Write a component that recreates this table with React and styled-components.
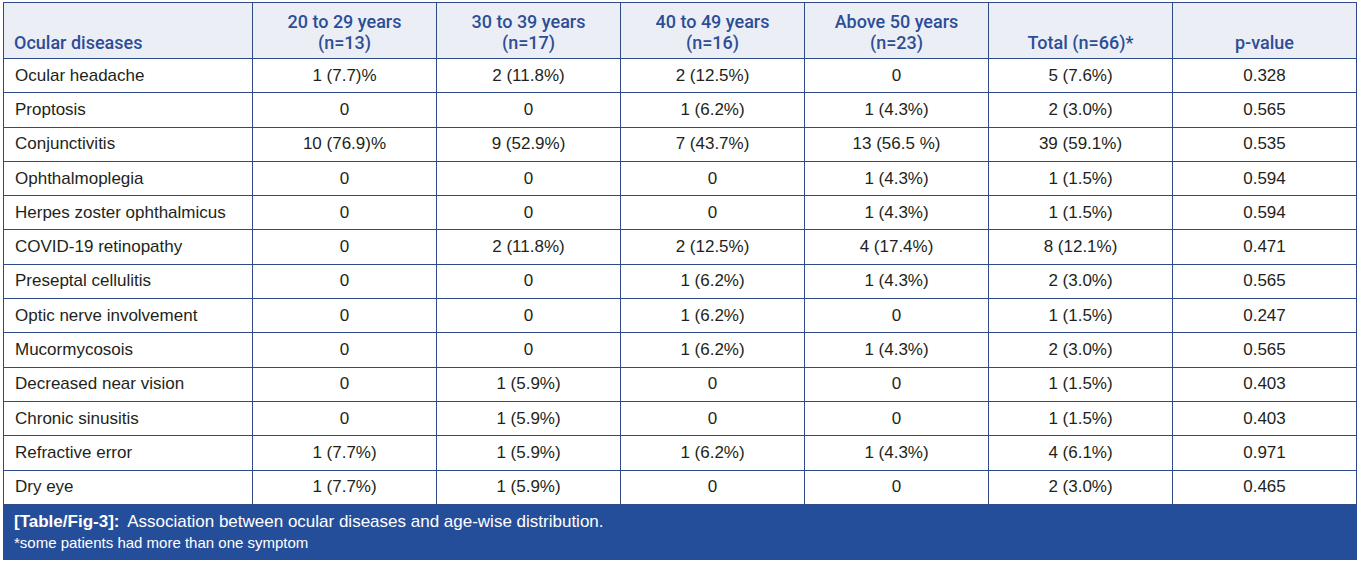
import styled, { createGlobalStyle } from 'styled-components';

const GlobalStyle = createGlobalStyle`
  body {
    margin: 0;
    background: #fff;
    font-family: 'Liberation Sans', Arial, sans-serif;
  }
`;

const Page = styled.div`
  padding: 2px 4px 0 3px;
`;

const Table = styled.table`
  width: 1353px;
  border-collapse: collapse;
  table-layout: fixed;
  font-size: 17px;
  color: #231f20;
`;

const Col = styled.col`
  width: ${(p) => p.$w}px;
`;

const HeadRow = styled.tr`
  height: 56px;
`;

const HeadCell = styled.th`
  padding: 0 10px 5px;
  background: #eceef6;
  color: #2d4e96;
  font-family: Roboto, 'Liberation Sans', sans-serif;
  font-weight: 500;
  font-size: 18px;
  line-height: 21px;
  vertical-align: bottom;
  text-align: ${(p) => (p.$left ? 'left' : 'center')};
  border: 1.5px solid #2d4a86;
`;

const Row = styled.tr`
  height: 34.3px;
`;

const Cell = styled.td`
  padding: 0 11px;
  text-align: ${(p) => (p.$left ? 'left' : 'center')};
  border: 1.5px solid #2d4a86;
  white-space: nowrap;
`;

const Caption = styled.div`
  width: 1354px;
  height: 55px;
  box-sizing: border-box;
  background: #254e9a;
  color: #fff;
  padding: 6px 11px 0;
`;

const CaptionTitle = styled.div`
  font-size: 17px;
  line-height: 22px;

  b {
    font-weight: bold;
    margin-right: 4px;
  }
`;

const CaptionNote = styled.div`
  font-size: 15px;
  line-height: 20px;
`;

const cols = [
  { label: ['20 to 29 years', '(n=13)'] },
  { label: ['30 to 39 years', '(n=17)'] },
  { label: ['40 to 49 years', '(n=16)'] },
  { label: ['Above 50 years', '(n=23)'] },
  { label: ['Total (n=66)*'] },
  { label: ['p-value'] },
];

const rows = [
  ['Ocular headache', '1 (7.7)%', '2 (11.8%)', '2 (12.5%)', '0', '5 (7.6%)', '0.328'],
  ['Proptosis', '0', '0', '1 (6.2%)', '1 (4.3%)', '2 (3.0%)', '0.565'],
  ['Conjunctivitis', '10 (76.9)%', '9 (52.9%)', '7 (43.7%)', '13 (56.5 %)', '39 (59.1%)', '0.535'],
  ['Ophthalmoplegia', '0', '0', '0', '1 (4.3%)', '1 (1.5%)', '0.594'],
  ['Herpes zoster ophthalmicus', '0', '0', '0', '1 (4.3%)', '1 (1.5%)', '0.594'],
  ['COVID-19 retinopathy', '0', '2 (11.8%)', '2 (12.5%)', '4 (17.4%)', '8 (12.1%)', '0.471'],
  ['Preseptal cellulitis', '0', '0', '1 (6.2%)', '1 (4.3%)', '2 (3.0%)', '0.565'],
  ['Optic nerve involvement', '0', '0', '1 (6.2%)', '0', '1 (1.5%)', '0.247'],
  ['Mucormycosois', '0', '0', '1 (6.2%)', '1 (4.3%)', '2 (3.0%)', '0.565'],
  ['Decreased near vision', '0', '1 (5.9%)', '0', '0', '1 (1.5%)', '0.403'],
  ['Chronic sinusitis', '0', '1 (5.9%)', '0', '0', '1 (1.5%)', '0.403'],
  ['Refractive error', '1 (7.7%)', '1 (5.9%)', '1 (6.2%)', '1 (4.3%)', '4 (6.1%)', '0.971'],
  ['Dry eye', '1 (7.7%)', '1 (5.9%)', '0', '0', '2 (3.0%)', '0.465'],
];

const widths = [249, 184, 184, 184, 184, 184, 184];

const App = () => {
  return (
    <Page>
      <GlobalStyle />
      <Table>
        <colgroup>
          {widths.map((w, i) => (
            <Col key={i} $w={w} />
          ))}
        </colgroup>
        <thead>
          <HeadRow>
            <HeadCell $left>Ocular diseases</HeadCell>
            {cols.map((c) => (
              <HeadCell key={c.label[0]}>
                {c.label.map((l) => (
                  <div key={l}>{l}</div>
                ))}
              </HeadCell>
            ))}
          </HeadRow>
        </thead>
        <tbody>
          {rows.map((r) => (
            <Row key={r[0]}>
              {r.map((v, i) => (
                <Cell key={i} $left={i === 0}>
                  {v}
                </Cell>
              ))}
            </Row>
          ))}
        </tbody>
      </Table>
      <Caption>
        <CaptionTitle>
          <b>[Table/Fig-3]:</b> Association between ocular diseases and age-wise distribution.
        </CaptionTitle>
        <CaptionNote>*some patients had more than one symptom</CaptionNote>
      </Caption>
    </Page>
  );
};

export default App;
